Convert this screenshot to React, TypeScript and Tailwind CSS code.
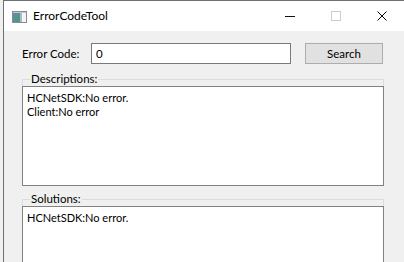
import React from 'react';

const font = { fontFamily: 'Lato, "Noto Sans", sans-serif' };

function AppIcon() {
  return (
    <svg width="15" height="12" viewBox="0 0 15 12">
      <rect x="0.5" y="0.5" width="14" height="11" fill="#f4f4f4" stroke="#8a8a8a" />
      <defs>
        <linearGradient id="g" x1="0" y1="0" x2="1" y2="1">
          <stop offset="0" stopColor="#5a8fb0" />
          <stop offset="1" stopColor="#4f9a6a" />
        </linearGradient>
      </defs>
      <rect x="1" y="2" width="7" height="9" fill="url(#g)" />
      <rect x="8" y="2" width="2" height="9" fill="#9fbfcf" />
      <rect x="1" y="1" width="13" height="1" fill="#c8c8c8" />
    </svg>
  );
}

function Group({ label, lines, height }: { label: string; lines: string[]; height: string }) {
  return (
    <div className="relative w-[362px]">
      <div className="h-[7px] border-x border-t border-[#dcdcdc]" />
      <span className="absolute left-[8px] top-[-7px] bg-[#f0f0f0] px-[1px] text-[11.5px] leading-[14px] text-black">
        {label}
      </span>
      <div className={`${height} border border-[#828282] bg-white px-[4px] pt-[4px] text-[11px] leading-[14px] text-black`}>
        {lines.map((l) => (
          <div key={l}>{l}</div>
        ))}
      </div>
    </div>
  );
}

export default function App() {
  return (
    <div className="w-[404px] h-[262px] overflow-hidden bg-[#f0f0f0] pl-[3px]" style={font}>
      <div className="h-full border-l border-t border-[#6f6f6f] flex flex-col">
        {/* title bar */}
        <div className="h-[30px] shrink-0 bg-white flex items-center relative">
          <div className="ml-[8px] mt-[1px]">
            <AppIcon />
          </div>
          <span className="ml-[6px] text-[12px] text-black">ErrorCodeTool</span>
          <div className="absolute top-0 left-[263px] flex">
            <div className="w-[46px] h-[30px] flex items-center justify-center">
              <div className="w-[10px] h-[1px] bg-[#111111]" />
            </div>
            <div className="w-[46px] h-[30px] flex items-center justify-center">
              <div className="w-[10px] h-[10px] border border-[#cccccc]" />
            </div>
            <div className="w-[46px] h-[30px] flex items-center justify-center">
              <svg width="10" height="10" viewBox="0 0 10 10">
                <path d="M0.5 0.5 L9.5 9.5 M9.5 0.5 L0.5 9.5" stroke="#000" strokeWidth="1" />
              </svg>
            </div>
          </div>
        </div>

        {/* body */}
        <div className="flex-1 pl-[18px] pt-[12px]">
          <div className="flex items-center h-[21px]">
            <span className="w-[69px] text-[11.5px] text-black">Error Code:</span>
            <div className="w-[200px] h-[21px] border border-[#7a7a7a] bg-white px-[4px] text-[11.5px] leading-[19px] text-black">
              0
            </div>
            <button className="ml-[14px] w-[78px] h-[21px] border border-[#adadad] bg-[#e1e1e1] text-[11.5px] leading-[19px] text-black">
              Search
            </button>
          </div>

          <div className="mt-[15px]">
            <Group label="Descriptions:" lines={['HCNetSDK:No error.', 'Client:No error']} height="h-[100px]" />
          </div>
          <div className="mt-[13px]">
            <Group label="Solutions:" lines={['HCNetSDK:No error.']} height="h-[100px]" />
          </div>
        </div>
      </div>
    </div>
  );
}
